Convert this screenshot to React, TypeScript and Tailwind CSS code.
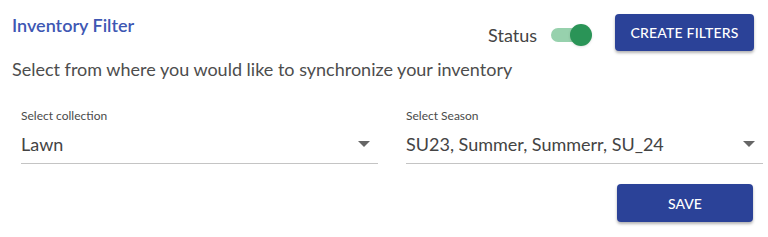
import React, { useState } from 'react';

// Campo tipo select con subrayado (estilo material)
const SelectField: React.FC<{ label: string; value: string }> = ({ label, value }) => (
  <div className="flex flex-col">
    <span className="text-[12px] leading-[16px] text-[#4a4a4a]">{label}</span>
    <div className="mt-[8px] flex items-center justify-between border-b border-[#c4c4c4] pb-[7px]">
      <span className="text-[18px] leading-[24px] text-[#444]">{value}</span>
      <svg width="12" height="6" viewBox="0 0 12 6" className="mr-[8px]">
        <path d="M0 0 L12 0 L6 6 Z" fill="#666" />
      </svg>
    </div>
  </div>
);

export default function App() {
  const [enabled, setEnabled] = useState(true);

  return (
    <div className="w-full h-[237px] bg-white font-['Lato','Noto_Sans',sans-serif] text-[#444]">
      {/* Cabecera */}
      <div className="flex justify-between pl-[12px] pr-[14px] pt-[14px]">
        <h2 className="mt-[0px] text-[18px] leading-[22px] font-semibold text-[#3e57b3]">Inventory Filter</h2>
        <div className="flex items-center">
          <span className="mt-[4px] text-[18px] leading-[22px] text-[#444]">Status</span>
          <button
            onClick={() => setEnabled(!enabled)}
            className="relative ml-[14px] mt-[4px] h-[22px] w-[42px]"
          >
            <span className={`absolute left-0 top-[4px] h-[14px] w-[38px] rounded-full ${enabled ? 'bg-[#97d1ad]' : 'bg-[#bbb]'}`} />
            <span className={`absolute top-0 h-[22px] w-[22px] rounded-full shadow-sm ${enabled ? 'left-[19px] bg-[#2a9457]' : 'left-0 bg-white'}`} />
          </button>
          <button className="ml-[22px] h-[37px] w-[139px] rounded-[4px] bg-[#2b4298] text-[14px] font-medium tracking-[0.2px] text-white shadow-[0_2px_3px_rgba(0,0,0,0.3)]">
            CREATE FILTERS
          </button>
        </div>
      </div>

      {/* Descripción */}
      <p className="mt-[6px] pl-[12px] text-[18px] leading-[24px] text-[#4d4d4d]">
        Select from where you would like to synchronize your inventory
      </p>

      {/* Selectores */}
      <div className="mt-[27px] ml-[21px] mr-[5px] grid grid-cols-2 gap-[28px]">
        <SelectField label="Select collection" value="Lawn" />
        <SelectField label="Select Season" value="SU23, Summer, Summerr, SU_24" />
      </div>

      <div className="mt-[20px] flex justify-end pr-[15px]">
        <button className="h-[38px] w-[136px] rounded-[4px] bg-[#2b4298] text-[14px] font-medium text-white shadow-[0_2px_3px_rgba(0,0,0,0.3)]">
          SAVE
        </button>
      </div>
    </div>
  );
}
